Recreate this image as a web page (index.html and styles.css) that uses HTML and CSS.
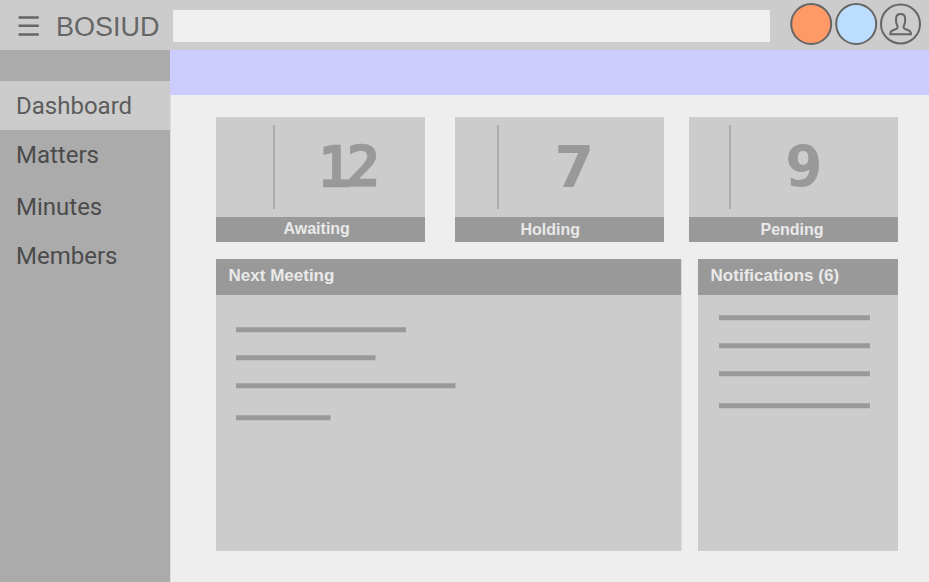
FILE: index.html
```html
<!DOCTYPE html>
<html lang="en">
<head>
<meta charset="utf-8">
<title>BOSIUD</title>
<link rel="stylesheet" href="styles.css">
</head>
<body>
<header class="topbar">
  <svg class="menu-icon" viewBox="0 0 21 20" aria-hidden="true"><path d="M.5 1.500h20.300M.5 9.800h20.300M.5 18.500h20.300"/></svg>
  <h1 class="brand">BOSIUD</h1>
  <div class="search"></div>
  <div class="actions">
    <svg viewBox="0 0 42 42"><circle class="orange" cx="21.200" cy="21" r="20"/></svg>
    <svg viewBox="0 0 42 42"><circle class="blue" cx="21.200" cy="21" r="20"/></svg>
    <svg viewBox="0 0 42 42"><circle cx="20.500" cy="21" r="19.500"/><path class="person" d="M10.300 31.300V30.500C10.300 27.300 13.200 27 16 26C18 25.200 17.800 23.700 17.200 22.500C15.800 20.300 15.900 18 16 15.500C16.200 12.500 17.900 11 20.600 11S25 12.500 25.200 15.500C25.300 18 25.400 20.300 24 22.500C23.400 23.700 23.200 25.200 25.200 26C28 27 30.900 27.300 30.900 30.500V31.300Z"/></svg>
  </div>
</header>
<div class="layout">
  <nav class="sidebar">
    <a class="item active">Dashboard</a>
    <a class="item">Matters</a>
    <a class="item minutes">Minutes</a>
    <a class="item">Members</a>
  </nav>
  <main>
    <div class="banner"></div>
    <section class="stats">
      <article class="card awaiting"><div class="figure"><i></i><b>12</b></div><footer>Awaiting</footer></article>
      <article class="card holding"><div class="figure"><i></i><b>7</b></div><footer>Holding</footer></article>
      <article class="card pending"><div class="figure"><i></i><b>9</b></div><footer>Pending</footer></article>
    </section>
    <section class="panels">
      <article class="panel meeting">
        <h2>Next Meeting</h2>
        <svg viewBox="0 0 465 256"><path d="M20 34.700h170M20 62.700h139.500M20 90.700h219.500M20 122.700h94.500"/></svg>
      </article>
      <article class="panel notices">
        <h2>Notifications (6)</h2>
        <svg viewBox="0 0 200 256"><path d="M21 22.700h151M21 50.700h151M21 78.700h151M21 110.700h151"/></svg>
      </article>
    </section>
  </main>
</div>
</body>
</html>
```

FILE: styles.css
```css
* { box-sizing: border-box; }
body { margin: 0; height: 582px; overflow: hidden; background: #eee; font-family: "Liberation Sans", Arial, sans-serif; }
.topbar { display: flex; align-items: center; height: 50px; background: #ccc; color: #666; }
.menu-icon { width: 21px; height: 20px; margin: 2px 0 0 18px; fill: none; stroke: #666; stroke-width: 2.500; overflow: visible; }
.brand { width: 117px; margin: 4px 0 0 17px; font-size: 27px; font-weight: 400; line-height: 32px; }
.search { width: 597px; height: 32px; margin-top: 2px; background: #efefef; }
.actions { display: flex; gap: 3px; margin: -2px 0 0 20px; }
.actions svg { width: 42px; height: 42px; fill: none; stroke: #666; stroke-width: 2; overflow: visible; }
.actions .orange { fill: #ff9966; }
.actions .blue { fill: #bbddff; }
.layout { display: flex; height: 532px; }
.sidebar { width: 170px; padding-top: 31px; background: #ababab; }
.item { display: flex; align-items: center; height: 49px; padding-left: 16px; font: 24px/28px Roboto, sans-serif; color: #4b4b4b; }
.item.active { background: #ccc; color: #5c5c5c; }
.item.minutes { margin-top: 3px; }
main { flex: 1; box-shadow: inset 1px 0 #dcdcdc; }
.banner { height: 45px; background: #ccccff; }
.stats { display: flex; padding: 22px 31px 0 46px; }
.card { width: 209px; height: 125px; background: #ccc; }
.holding { margin-left: 30px; }
.pending { margin-left: 25px; }
.figure { display: flex; height: 100px; padding-top: 8px; }
.figure i { width: 2px; height: 84px; background: #ababab; }
.figure b { height: 84px; font: bold 57px/84px "DejaVu Sans", sans-serif; color: #999; }
.awaiting i { margin-left: 57px; }
.awaiting b { margin-left: 43px; font-family: "DejaVu Sans Mono", monospace; letter-spacing: -6px; -webkit-text-stroke: .6px #999; }
.holding i { margin-left: 42px; }
.holding b { margin-left: 55.500px; }
.pending i { margin-left: 40px; }
.pending b { margin-left: 53px; transform: scaleX(.93); }
.card footer { height: 25px; background: #999; color: #e9e9e9; font-size: 16px; font-weight: 700; line-height: 25px; }
.awaiting footer { padding-left: 67.500px; line-height: 23px; }
.holding footer { padding-left: 65.500px; }
.pending footer { padding-left: 71.500px; }
.panels { display: flex; gap: 17px; padding: 17px 31px 0 46px; }
.panel { height: 292px; background: #ccc; }
.meeting { width: 465px; box-shadow: 1px 0 #dbdbdb; }
.notices { width: 200px; }
.panel h2 { height: 36px; margin: 0; padding-left: 12.600px; background: #999; color: #e9e9e9; font-size: 17px; line-height: 33px; }
.panel svg { display: block; width: 100%; height: 256px; fill: none; stroke: #999; stroke-width: 5; }
```
